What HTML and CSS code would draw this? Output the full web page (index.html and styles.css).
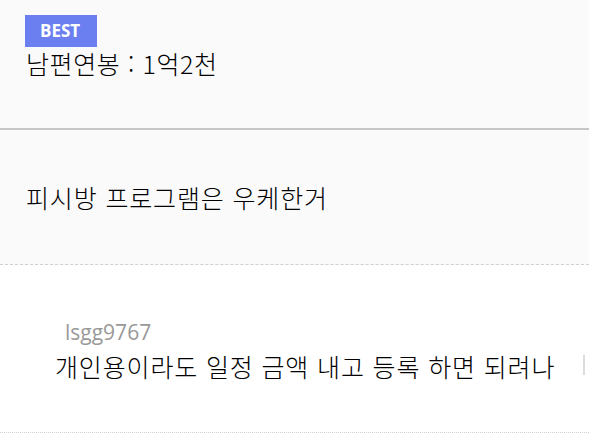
FILE: index.html
```html
<!DOCTYPE html>
<html lang="ko">
<head>
    <meta charset="UTF-8">
    <title>게시판</title>
    <link rel="stylesheet" href="styles.css">
</head>
<body>
    <section class="post post-best">
        <span class="badge">BEST</span>
        <p class="post-title">남편연봉 : 1억2천</p>
    </section>

    <section class="post post-plain">
        <p class="post-title">피시방 프로그램은 우케한거</p>
    </section>

    <section class="reply">
        <div class="reply-body">
            <span class="reply-author">lsgg9767</span>
            <p class="reply-text">개인용이라도 일정 금액 내고 등록 하면 되려나</p>
        </div>
        <span class="reply-bar"></span>
    </section>
</body>
</html>
```
FILE: styles.css
```css
body {
    margin: 0;
    background: #fff;
    font-family: "Noto Sans CJK KR", "Noto Sans", sans-serif;
    font-weight: 300;
    color: #000;
}
.post {
    background-color: #fafafa;
    padding: 0 26px;
}
.post-best {
    height: 130px;
    padding-top: 15px;
    box-sizing: border-box;
    border-bottom: 2px solid #c6c6c6;
}
.badge {
    display: inline-block;
    width: 72px;
    box-sizing: border-box;
    padding-left: 15px;
    background-color: #6b7ff0;
    color: #fff;
    font-family: "Open Sans", sans-serif;
    font-weight: bold;
    font-size: 17px;
    line-height: 32px;
    margin-left: -1px;
}
.post-title {
    margin: 0;
    font-size: 25px;
    line-height: 30px;
    letter-spacing: 0.85px;
}
.post-best .post-title {
    margin-top: 1px;
    letter-spacing: 0.6px;
}
.post-plain {
    height: 135px;
    display: flex;
    align-items: center;
    border-bottom: 1px dashed #d0d0d0;
    box-sizing: border-box;
}
.reply {
    height: 168px;
    box-sizing: border-box;
    border-bottom: 1px dotted #d0d0d0;
    display: flex;
    align-items: flex-start;
    padding: 53px 0 0 55px;
}
.reply-body {
    flex: 1;
}
.reply-author {
    display: block;
    color: #999;
    font-family: "Open Sans", sans-serif;
    font-weight: normal;
    font-size: 21px;
    line-height: 28px;
    padding-left: 10px;
}
.reply-text {
    margin: 5px 0 0;
    font-size: 25px;
    line-height: 30px;
    letter-spacing: 0.85px;
}
.reply-bar {
    width: 2px;
    height: 20px;
    margin: 37px 4px 0 0;
    background-color: #dcdcdc;
}
```
